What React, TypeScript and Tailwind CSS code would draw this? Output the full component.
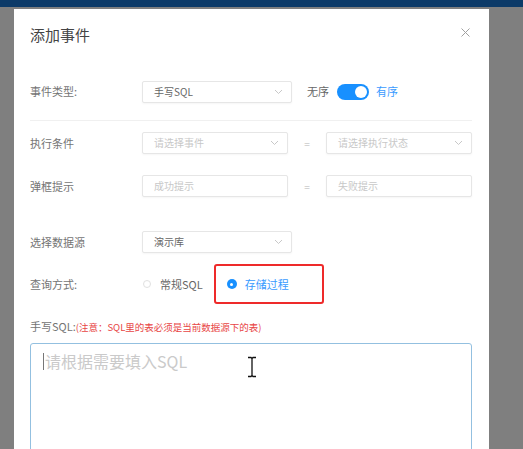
import React from "react";

function Chevron() {
  return (
    <svg width="9" height="6" viewBox="0 0 9 6" className="shrink-0">
      <path d="M1 1l3.5 3.5L8 1" fill="none" stroke="#c8c8c8" strokeWidth="1" />
    </svg>
  );
}

interface BoxProps {
  text: string;
  placeholder?: boolean;
  select?: boolean;
  width: string;
}

function Box({ text, placeholder, select, width }: BoxProps) {
  return (
    <div
      className={`${width} h-[22px] flex items-center justify-between pl-[11px] pr-[8px] border border-[#e6e6e6] rounded-[2px] bg-white shadow-[0_1px_2px_rgba(0,0,0,0.04)]`}
    >
      <span className={`text-[10px] leading-none ${placeholder ? "text-[#c8c8c8]" : "text-[#666]"}`}>{text}</span>
      {select && <Chevron />}
    </div>
  );
}

function Label({ children }: { children: React.ReactNode }) {
  return <div className="w-[112px] shrink-0 text-[11px] text-[#747474] leading-none">{children}</div>;
}

export default function App() {
  return (
    <div
      className="w-[523px] h-[449px] overflow-hidden bg-[#7f7f7f] flex flex-col"
      style={{ fontFamily: '"Noto Sans CJK SC", "Noto Sans", sans-serif' }}
    >
      <div className="h-[7px] bg-[#0c3a68] shrink-0" />
      <div className="relative mt-[2px] ml-[14px] w-[475px] flex-1 bg-white pl-[16px] pr-[17px] overflow-hidden">
        {/* header */}
        <div className="flex items-start justify-between pt-[16px]">
          <div className="text-[15px] leading-[20px] text-[#444]">添加事件</div>
          <svg width="9" height="9" viewBox="0 0 9 9" className="mt-[3px] mr-[2px]">
            <path d="M0.5 0.5l8 8M8.5 0.5l-8 8" stroke="#a0a0a0" strokeWidth="1" />
          </svg>
        </div>

        {/* 事件类型 */}
        <div className="mt-[36px] flex items-center h-[21px]">
          <Label>事件类型:</Label>
          <Box text="手写SQL" select width="w-[150px]" />
          <span className="ml-[15px] text-[11px] text-[#666]">无序</span>
          <div className="ml-[8px] w-[32px] h-[16px] rounded-full bg-[#1890ff] flex items-center justify-end pr-[2px]">
            <div className="w-[12px] h-[12px] rounded-full bg-white" />
          </div>
          <span className="ml-[7px] text-[11px] text-[#3a9bff]">有序</span>
        </div>

        <div className="mt-[18px] border-t border-[#f0f0f0]" />

        {/* 执行条件 */}
        <div className="mt-[11px] flex items-center">
          <Label>执行条件</Label>
          <Box text="请选择事件" placeholder select width="w-[146px]" />
          <span className="w-[38px] text-center text-[10px] text-[#ccc]">=</span>
          <Box text="请选择执行状态" placeholder select width="w-[146px]" />
        </div>

        {/* 弹框提示 */}
        <div className="mt-[21px] flex items-center">
          <Label>弹框提示</Label>
          <Box text="成功提示" placeholder width="w-[146px]" />
          <span className="w-[38px] text-center text-[10px] text-[#ccc]">=</span>
          <Box text="失败提示" placeholder width="w-[146px]" />
        </div>

        {/* 选择数据源 */}
        <div className="mt-[34px] flex items-center">
          <Label>选择数据源</Label>
          <Box text="演示库" select width="w-[150px]" />
        </div>

        {/* 查询方式 */}
        <div className="mt-[11px] flex items-center h-[40px]">
          <Label>查询方式:</Label>
          <div className="ml-[1px] w-[8px] h-[8px] rounded-full border border-[#e0e0e0]" />
          <span className="ml-[9px] text-[11px] text-[#666]">常规SQL</span>
          <div className="ml-[11px] h-[40px] w-[110px] border-2 border-[#ee2a2a] rounded-[3px] flex items-center pl-[11px]">
            <div className="w-[10px] h-[10px] rounded-full bg-[#1890ff] flex items-center justify-center">
              <div className="w-[3px] h-[3px] rounded-full bg-white" />
            </div>
            <span className="ml-[8px] text-[11px] text-[#3a9bff]">存储过程</span>
          </div>
        </div>

        {/* 手写SQL */}
        <div className="mt-[15px] flex items-baseline leading-[14px]">
          <span className="text-[11px] text-[#747474]">手写SQL:</span>
          <span className="text-[9.5px] text-[#e84545]">(注意：SQL里的表必须是当前数据源下的表)</span>
        </div>

        <div className="mt-[9px] h-[200px] border border-[#93c0e0] rounded-[3px] pt-[8px] pl-[12px] flex items-start">
          <div className="w-px h-[17px] bg-[#777] mt-[1px]" />
          <span className="ml-[1px] text-[16px] leading-[19px] text-[#cacaca]">请根据需要填入SQL</span>
        </div>

        {/* mouse I-beam cursor */}
        <svg
          width="12"
          height="22"
          viewBox="0 0 12 22"
          className="absolute left-[232px] top-[347px]"
        >
          <path d="M2 1.5h3l1 1 1-1h3M6 2.5v17M2 20.5h3l1-1 1 1h3" fill="none" stroke="#fff" strokeWidth="3" />
          <path d="M2 1.5h3l1 1 1-1h3M6 2.5v17M2 20.5h3l1-1 1 1h3" fill="none" stroke="#111" strokeWidth="1.3" />
        </svg>
      </div>
    </div>
  );
}
